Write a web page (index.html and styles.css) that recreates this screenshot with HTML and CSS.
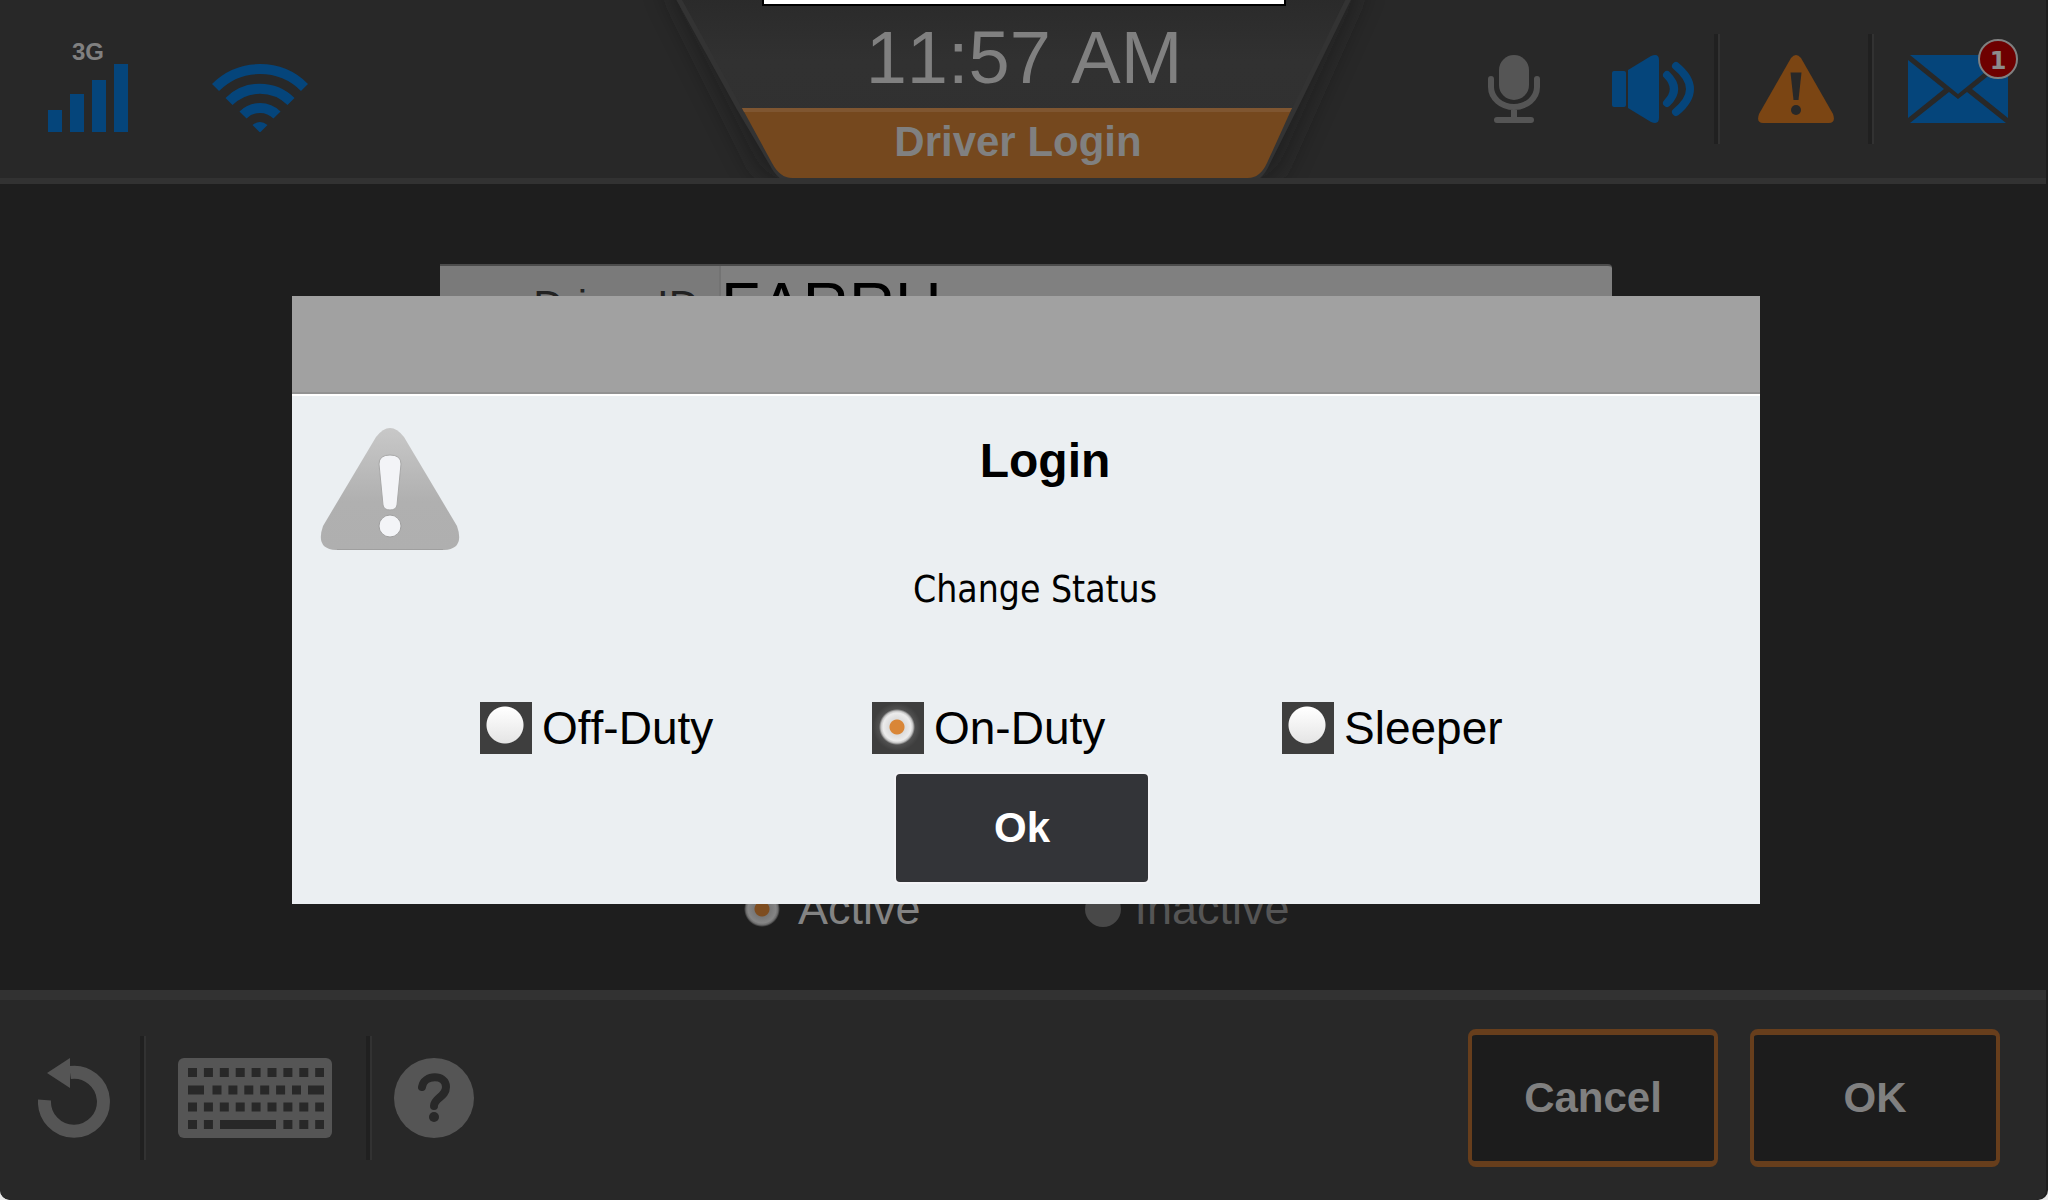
FILE: index.html
```html
<!DOCTYPE html>
<html lang="en">
<head>
<meta charset="utf-8">
<title>Driver Login</title>
<link rel="stylesheet" href="styles.css">
</head>
<body>
<div class="notch"></div>

<header class="topbar">
  <div class="topbar-left">
    <div class="signal">
      <span class="signal-label">3G</span>
      <svg width="80" height="68" viewBox="0 0 80 68" aria-hidden="true"><path fill="#05457b" d="M0 46h14v22H0zM22 30h14v38H22zM44 16h14v52H44zM66 0h14v68H66z"/></svg>
    </div>
    <svg width="96" height="68" viewBox="0 0 96 68" aria-hidden="true">
      <g fill="none" stroke="#05457b" stroke-width="10">
        <path d="M3.500 23.500A63 63 0 0 1 92.500 23.500"/>
        <path d="M17 37.500A44 44 0 0 1 79 37.500"/>
        <path d="M31 51A24 24 0 0 1 65 51"/>
      </g>
      <path fill="#05457b" d="M40.500 61Q48 55 55.500 61L48 68.500z"/>
    </svg>
  </div>

  <div class="tab">
    <svg class="tab-shape" width="680" height="184" viewBox="0 0 680 184" aria-hidden="true">
      <defs>
        <linearGradient id="tabfill" x1="0" y1="0" x2="0" y2="1"><stop offset="0" stop-color="#2a2a2a"/><stop offset=".35" stop-color="#313131"/><stop offset="1" stop-color="#303030"/></linearGradient>
        <filter id="soft" x="-20%" y="-20%" width="140%" height="140%"><feGaussianBlur stdDeviation="14"/></filter>
      </defs>
      <path d="M-8-20L86 168Q94 180 106 180H586Q598 180 604 168L688-20z" fill="#1e1e1e" opacity=".6" filter="url(#soft)"/>
      <path d="M3-4L65 108 98 164Q106 180 120 181H572Q586 180 593 164L621 108 676-4z" fill="url(#tabfill)" stroke="#333" stroke-width="5"/>
      <path d="M68 108H618L593 163Q586 178 574 178H118Q106 178 98 163z" fill="#75481e"/>
      <path d="M68 108H618L616 112H70z" fill="#7f5631"/>
    </svg>
    <time class="clock">11:57 AM</time>
    <h1 class="page-title">Driver Login</h1>
  </div>

  <div class="topbar-right">
    <button class="tool mic" aria-label="Microphone">
      <svg width="52" height="68" viewBox="0 0 52 68"><rect x="11" y="0" width="30" height="45" rx="15" fill="#555"/><path d="M3 24v8a23 20 0 0 0 46 0v-8M26 52v12M9 65h34" fill="none" stroke="#555" stroke-width="6" stroke-linecap="round"/></svg>
    </button>
    <button class="tool speaker" aria-label="Volume">
      <svg width="82" height="68" viewBox="0 0 82 68"><rect x="0" y="16" width="14" height="36" rx="2" fill="#05457b"/><path d="M16 15L39 1Q47-2 47 5V63Q47 70 39 67L16 53z" fill="#05457b"/><path d="M55 20Q69 34 55 48M64 11Q92 34 64 57" fill="none" stroke="#05457b" stroke-width="8" stroke-linecap="round"/></svg>
    </button>
    <i class="rule"></i>
    <button class="tool alert" aria-label="Alerts">
      <svg width="76" height="68" viewBox="0 0 76 68"><path d="M33 3Q38-3 43 3L75 59Q78 68 71 68H5Q-2 68 1 59z" fill="#7b4513"/><path d="M32.500 17.500h11L40.500 45h-5z" fill="#282828"/><circle cx="38" cy="55" r="5" fill="#282828"/></svg>
    </button>
    <i class="rule"></i>
    <button class="tool mail" aria-label="Messages">
      <svg width="100" height="68" viewBox="0 0 100 68"><path fill="#05457b" d="M2 0H98L50 39zM0 5L36 34 0 63zM100 5V63L64 34zM2 68L41 37 50 44 59 37 98 68z"/></svg>
      <span class="badge">1</span>
    </button>
  </div>
</header>

<main class="stage">
  <form class="login">
    <div class="field">
      <label class="field-label" for="driver">Driver ID</label>
      <input class="field-input" id="driver" type="text" value="FARRU">
    </div>
    <div class="states">
      <label class="state"><input class="dot" type="radio" name="state" checked>Active</label>
      <label class="state state-off"><input class="dot" type="radio" name="state" disabled>Inactive</label>
    </div>
  </form>

  <section class="dialog" role="dialog" aria-labelledby="dialog-title">
    <div class="dialog-bar"></div>
    <div class="dialog-head">
      <svg width="140" height="122" viewBox="0 0 140 122" aria-hidden="true">
        <defs><linearGradient id="warn" x1="0" y1="0" x2="0" y2="1"><stop offset="0" stop-color="#c8c8c8"/><stop offset=".6" stop-color="#b0b0b0"/><stop offset="1" stop-color="#afafaf"/></linearGradient></defs>
        <path d="M56 9Q70-9 84 9L137 98Q145 121 124 122H16Q-5 121 3 98z" fill="url(#warn)"/>
        <path d="M17 121.500H123" stroke="#9f9f9f"/>
        <path d="M59 36Q59 27 70 27T81 36L77 77Q76 82 70 82T63 77z" fill="#f3f4f7" stroke="#a8a8a8"/>
        <circle cx="70" cy="98" r="11" fill="#f3f4f7" stroke="#a0a0a0"/>
      </svg>
      <h2 class="dialog-title" id="dialog-title">Login</h2>
    </div>
    <p class="dialog-text">Change Status</p>
    <div class="options">
      <label class="option"><input class="choice" type="radio" name="duty">Off-Duty</label>
      <label class="option"><input class="choice" type="radio" name="duty" checked>On-Duty</label>
      <label class="option"><input class="choice" type="radio" name="duty">Sleeper</label>
    </div>
    <div class="dialog-actions"><button class="confirm">Ok</button></div>
  </section>
</main>

<footer class="bottombar">
  <button class="tool back" aria-label="Back">
    <svg width="72" height="80" viewBox="0 0 72 80"><path d="M6.500 42A29.500 29.500 0 1 0 32 14.500" fill="none" stroke="#555" stroke-width="13"/><path d="M9 15L32 0V30z" fill="#555"/></svg>
  </button>
  <i class="rule rule-tall"></i>
  <button class="tool keyboard" aria-label="Keyboard">
    <svg width="154" height="80" viewBox="0 0 154 80"><rect width="154" height="80" rx="6" fill="#555"/>
      <g stroke="#282828" stroke-width="9" fill="none">
        <path d="M10 14.500H146" stroke-dasharray="9 6.900"/>
        <path d="M10 32H26M130 32H146"/><path d="M34.500 32H124" stroke-dasharray="9 6.900"/>
        <path d="M10 49H146" stroke-dasharray="9 6.900"/>
        <path d="M10 66.500H36" stroke-dasharray="9 6.900"/><path d="M42 66.500H98"/><path d="M105.400 66.500H146" stroke-dasharray="9 6.900"/>
      </g></svg>
  </button>
  <i class="rule rule-tall"></i>
  <button class="tool help" aria-label="Help">
    <svg width="80" height="80" viewBox="0 0 80 80"><circle cx="40" cy="40" r="40" fill="#555"/><path d="M28 29C30 16 52 16 52 29C52 39 40 40 40 48" fill="none" stroke="#282828" stroke-width="8" stroke-linecap="round"/><circle cx="40" cy="59" r="5" fill="#282828"/></svg>
  </button>
  <div class="actions">
    <button class="action">Cancel</button>
    <button class="action">OK</button>
  </div>
</footer>
</body>
</html>
```
FILE: styles.css
```css
* { box-sizing: border-box; }

html { background: #e8e8e8; }

body {
  position: relative;
  display: flex;
  flex-direction: column;
  min-height: 100vh;
  margin: 0;
  padding-right: 2px;
  overflow-x: hidden;
  border-radius: 0 0 10px 10px;
  background: #1e1e1e;
  color: #808080;
  font-family: "Liberation Sans", Arial, sans-serif;
  font-kerning: none;
}

button, input { font-family: inherit; font-kerning: inherit; }
h1, h2, p { margin: 0; }
svg { display: block; }

.notch {
  position: absolute;
  z-index: 2;
  top: 0;
  left: 0;
  right: 0;
  width: 524px;
  height: 6px;
  margin: 0 auto;
  border: 2px solid #000;
  border-top: 0;
  background: #fff;
}

/* Top bar */
.topbar {
  display: grid;
  grid-template-columns: 1fr 680px 1fr;
  height: 184px;
  padding-right: 18px;
  border-bottom: 6px solid #323232;
  background: #282828;
}

.topbar-left {
  display: flex;
  align-items: flex-end;
  gap: 84px;
  padding: 0 0 46px 48px;
}

.signal-label {
  display: block;
  height: 24px;
  font-size: 24px;
  font-weight: bold;
  line-height: 24px;
  text-align: center;
}

.tab { position: relative; text-align: center; }

.tab-shape {
  position: absolute;
  top: 0;
  left: 0;
  overflow: visible;
  clip-path: inset(0 -60px 6px -60px);
}

.clock {
  position: relative;
  display: block;
  padding: 4px 0 0 20px;
  font-size: 74px;
  line-height: 108px;
}

.page-title {
  position: relative;
  padding-left: 8px;
  font-size: 42px;
  line-height: 60px;
}

.topbar-right {
  display: flex;
  align-items: center;
  justify-content: flex-end;
  padding-right: 20px;
}

.tool {
  position: relative;
  padding: 0;
  border: 0;
  background: none;
}

.speaker { margin: 0 20px 0 72px; }
.alert { margin: 0 34px 0 38px; }
.mail { margin-left: 34px; }

.rule {
  width: 6px;
  height: 110px;
  border-left: 4px solid #202020;
  border-right: 2px solid #323232;
}

.rule-tall { height: 124px; }

.badge {
  position: absolute;
  top: -16px;
  right: -10px;
  width: 40px;
  height: 40px;
  border: 2px solid #808080;
  border-radius: 50%;
  background: #6e0000;
  color: #8c8c8c;
  font: bold 24px/40px "DejaVu Sans", sans-serif;
  text-align: center;
}

/* Login form */
.stage {
  position: relative;
  display: flex;
  flex: 1;
  flex-direction: column;
  align-items: center;
  min-height: 800px;
  padding: 80px 0 54px 6px;
}

.login {
  display: flex;
  flex: 1;
  flex-direction: column;
  justify-content: space-between;
  width: 1172px;
  max-width: 80%;
}

.field {
  display: grid;
  grid-template-columns: 281px 1fr;
  height: 82px;
  border-top: 2px solid #4c4c4c;
  border-radius: 0 4px 0 0;
  background: #808080;
}

.field-label {
  padding-right: 20px;
  border-right: 2px solid #737373;
  background: #7a7a7a;
  color: #222;
  font-size: 42px;
  line-height: 80px;
  text-align: right;
}

.field-input {
  width: 100%;
  padding: 0;
  border: 0;
  background: none;
  color: #000;
  font-size: 64px;
}

.states {
  display: flex;
  gap: 164px;
  padding-left: 304px;
}

.state {
  display: flex;
  align-items: center;
  gap: 18px;
  color: #838383;
  font-size: 45px;
  line-height: 54px;
}

.state-off { gap: 14px; color: #555; }

.dot {
  appearance: none;
  width: 36px;
  height: 36px;
  margin: 0;
  border-radius: 50%;
  background: #484848;
}

.dot:checked { background: radial-gradient(circle, #7e4d20 7px, #777 8px, #858585 14px, #6c6c6c 16px, #1e1e1e 18px); }

/* Status dialog */
.dialog {
  position: absolute;
  top: 112px;
  left: 6px;
  right: 0;
  width: 1468px;
  max-width: 90%;
  margin: 0 auto;
  padding-bottom: 20px;
  background: #ebeff2;
  color: #000;
}

.dialog-bar {
  height: 100px;
  border-bottom: 2px solid #fff;
  background: linear-gradient(#a1a1a1 96px, #929292 96px);
}

.dialog-head {
  display: flex;
  align-items: flex-start;
  padding: 32px 130px 0 28px;
}

.dialog-title {
  flex: 1;
  font-size: 48px;
  line-height: 66px;
  text-align: center;
}

.dialog-text {
  margin-top: 18px;
  padding-left: 18px;
  font-family: "DejaVu Sans Condensed", "DejaVu Sans", sans-serif;
  font-size: 37px;
  font-stretch: condensed;
  line-height: 44px;
  text-align: center;
}

.options {
  display: grid;
  grid-template-columns: 392fr 410fr 478fr;
  margin-top: 90px;
  padding-left: 188px;
}

.option {
  display: flex;
  align-items: center;
  gap: 10px;
  font-size: 46px;
  line-height: 52px;
}

.choice {
  appearance: none;
  width: 52px;
  height: 52px;
  margin: 0;
  background: radial-gradient(circle at 25px 23px, #fff0 18px, #3e3e3e 19px), linear-gradient(#fff 6px, #e4e4e4 42px);
}

.choice:checked { background: radial-gradient(circle at 25px 25px, #d98637 7px, #dcdcdc 8px, #ececec 14px, #c4c4c4 16px, #505050 18px, #3e3e3e 24px); }

.dialog-actions {
  display: flex;
  justify-content: center;
  margin-top: 18px;
  padding-right: 8px;
}

.confirm {
  width: 256px;
  height: 112px;
  border: 2px solid #f3f3f6;
  border-radius: 6px;
  background: #333438;
  color: #fff;
  font-size: 42px;
  font-weight: bold;
}

/* Bottom bar */
.bottombar {
  display: flex;
  align-items: center;
  height: 210px;
  padding: 0 46px 4px 38px;
  border-top: 10px solid #323232;
  border-radius: 0 0 10px 10px;
  background: #282828;
}

.back { margin-right: 30px; }
.keyboard { margin: 0 34px 0 32px; }
.help { margin-left: 22px; }

.actions {
  display: flex;
  gap: 32px;
  margin-left: auto;
}

.action {
  width: 250px;
  height: 138px;
  border: solid #673e1c;
  border-width: 6px 4px;
  border-radius: 8px;
  background: #1c1c1c;
  color: #808080;
  font-size: 42px;
  font-weight: bold;
}
```
